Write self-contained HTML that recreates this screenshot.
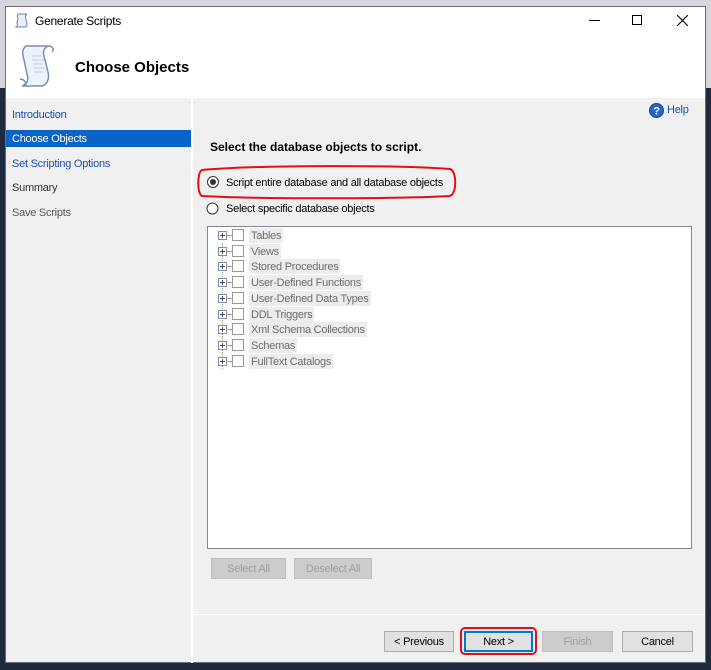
<!DOCTYPE html>
<html><head><style>
*{margin:0;padding:0;box-sizing:border-box}
body{width:711px;height:670px;position:relative;overflow:hidden;background:#1f2a3f;font-family:"Liberation Sans",sans-serif;font-size:11px;letter-spacing:-0.25px;color:#000}
.a{position:absolute}
.btn{position:absolute;height:21px;border:1px solid #adadad;background:#e1e1e1;text-align:center;line-height:20px}
.dis{background:#cccccc;border-color:#bfbfbf;color:#a0a0a0}
.it{position:absolute;left:0;height:15px}
.pl{position:absolute;left:10px;top:3px;width:9px;height:9px;border:1px solid #8c8c8c;background:#fff}
.pl:before{content:"";position:absolute;left:1px;top:3px;width:5px;height:1px;background:#2a4ea0}
.pl:after{content:"";position:absolute;left:3px;top:1px;width:1px;height:5px;background:#2a4ea0}
.ln{position:absolute;left:19px;top:7px;width:6px;height:1px;background:#a0a0a0}
.cb{position:absolute;left:24px;top:1px;width:12px;height:12px;border:1px solid #999;background:#fff}
.tx{position:absolute;left:41px;top:0;height:15px;line-height:16px;padding:0 2px;background:#ececec;color:#6d6d6d;white-space:nowrap}
.nav{position:absolute;left:6px;width:185px;height:17px;line-height:18px;padding-left:6px}
</style></head><body>
<div class="a" style="left:0;top:0;width:711px;height:88px;background:#d6d6dc"></div>
<div class="a" style="left:5px;top:6px;width:701px;height:657px;border:1px solid #6d6d6d;background:#f0f0f0"></div>
<div class="a" style="left:6px;top:7px;width:699px;height:91px;background:#fff"></div>
<svg class="a" style="left:14px;top:13px" width="16" height="16" viewBox="0 0 16 16"><path d="M4 1h9c-2 1-2 3-1 5l1 5c0 2-1 3-2 3H2c1-1 2-2 1-4L4 5C3 3 3 2 4 1z" fill="#e8eef8" stroke="#6a7fa8"/></svg>
<div class="a" style="left:35px;top:14px;font-size:12px">Generate Scripts</div>
<div class="a" style="left:589px;top:20px;width:11px;height:1px;background:#000"></div>
<div class="a" style="left:632px;top:15px;width:10px;height:10px;border:1px solid #000"></div>
<svg class="a" style="left:677px;top:15px" width="11" height="11"><path d="M0 0L11 11M11 0L0 11" stroke="#000" stroke-width="1.1"/></svg>
<svg class="a" style="left:16px;top:43px" width="42" height="47" viewBox="0 0 42 47"><path d="M10 3h22c-6 3-5 8-3 14l3 12c2 8-2 14-7 14H6c5-2 7-6 5-12L8 17C6 10 6 6 10 3z" fill="#eef2fa" stroke="#7b8db5" stroke-width="1.5"/><path d="M32 3c4 0 7 3 4 6" fill="none" stroke="#7b8db5" stroke-width="1.5"/><path d="M4 36c3 0 6 2 6 7" fill="none" stroke="#7b8db5" stroke-width="1.5"/><path d="M16 13h10M16 17h12M17 21h10M18 25h10M18 29h9" stroke="#c3cde0"/></svg>
<div class="a" style="left:75px;top:59px;font-size:15px;font-weight:bold;letter-spacing:0">Choose Objects</div>
<div class="a" style="left:191px;top:98px;width:2px;height:565px;background:#fff"></div>
<div class="nav" style="top:106px;color:#1a4fb4">Introduction</div>
<div class="nav" style="top:130px;background:#0a64c8;color:#fff">Choose Objects</div>
<div class="nav" style="top:155px;color:#1a4fb4">Set Scripting Options</div>
<div class="nav" style="top:179px;color:#333">Summary</div>
<div class="nav" style="top:204px;color:#555">Save Scripts</div>
<svg class="a" style="left:649px;top:103px" width="15" height="15"><circle cx="7.5" cy="7.5" r="7" fill="#2a63c8" stroke="#1a3f90"/><text x="7.5" y="11.5" font-size="11" font-weight="bold" fill="#fff" text-anchor="middle" font-family="Liberation Sans">?</text></svg>
<div class="a" style="left:667px;top:104px;color:#1a4fb4">Help</div>
<div class="a" style="left:210px;top:140px;font-weight:bold;font-size:12px;letter-spacing:0">Select the database objects to script.</div>
<svg class="a" style="left:196px;top:164px" width="263" height="36"><path d="M6 6C60 1 200 1 254 5C261 7 261 30 254 32C200 35 60 35 6 32C1 30 1 8 6 6z" fill="none" stroke="#e0101a" stroke-width="2"/><circle cx="17" cy="18" r="5.5" fill="#fff" stroke="#333"/><circle cx="17" cy="18" r="3" fill="#333"/></svg>
<div class="a" style="left:226px;top:177px">Script entire database and all database objects</div>
<svg class="a" style="left:206px;top:202px" width="13" height="13"><circle cx="6.5" cy="6.5" r="5.5" fill="#fff" stroke="#333"/></svg>
<div class="a" style="left:226px;top:203px">Select specific database objects</div>
<div class="a" style="left:207px;top:226px;width:485px;height:323px;background:#fff;border:1px solid #828790">
<div class="a" style="left:14px;top:16px;width:0;height:126px;border-left:1px dotted #a0a0a0"></div>
<div class="it" style="top:1px"><div class="pl"></div><div class="ln"></div><div class="cb"></div><div class="tx">Tables</div></div>
<div class="it" style="top:16.7px"><div class="pl"></div><div class="ln"></div><div class="cb"></div><div class="tx">Views</div></div>
<div class="it" style="top:32.4px"><div class="pl"></div><div class="ln"></div><div class="cb"></div><div class="tx">Stored Procedures</div></div>
<div class="it" style="top:48.1px"><div class="pl"></div><div class="ln"></div><div class="cb"></div><div class="tx">User-Defined Functions</div></div>
<div class="it" style="top:63.8px"><div class="pl"></div><div class="ln"></div><div class="cb"></div><div class="tx">User-Defined Data Types</div></div>
<div class="it" style="top:79.5px"><div class="pl"></div><div class="ln"></div><div class="cb"></div><div class="tx">DDL Triggers</div></div>
<div class="it" style="top:95.2px"><div class="pl"></div><div class="ln"></div><div class="cb"></div><div class="tx">Xml Schema Collections</div></div>
<div class="it" style="top:110.9px"><div class="pl"></div><div class="ln"></div><div class="cb"></div><div class="tx">Schemas</div></div>
<div class="it" style="top:126.6px"><div class="pl"></div><div class="ln"></div><div class="cb"></div><div class="tx">FullText Catalogs</div></div>
</div>
<div class="btn dis" style="left:211px;top:558px;width:75px">Select All</div>
<div class="btn dis" style="left:294px;top:558px;width:78px">Deselect All</div>
<div class="a" style="left:193px;top:614px;width:512px;height:1px;background:#fff"></div>
<div class="btn" style="left:384px;top:631px;width:70px">&lt; Previous</div>
<div class="a" style="left:460px;top:627px;width:77px;height:28px;border:2px solid #e0101a;border-radius:5px"></div>
<div class="btn" style="left:464px;top:631px;width:69px;border:2px solid #0078d7;line-height:18px">Next &gt;</div>
<div class="btn dis" style="left:542px;top:631px;width:71px">Finish</div>
<div class="btn" style="left:622px;top:631px;width:71px">Cancel</div>
</body></html>
